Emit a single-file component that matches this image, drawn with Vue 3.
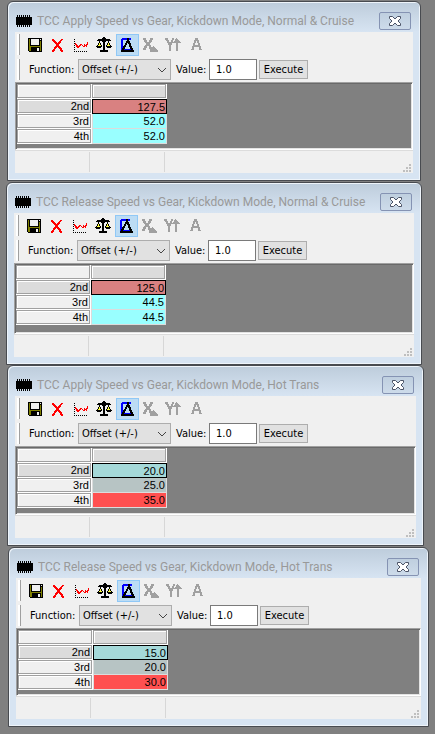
<template>
  <main class="desktop">
    <section
      v-for="(win, i) in windows"
      :key="win.title"
      class="window"
      :style="{ left: win.x + 'px', top: win.y + 'px', width: win.w + 'px', minHeight: win.h + 'px' }"
    >
      <header class="titlebar">
        <svg class="chip" viewBox="0 0 16 12" width="16" height="12" shape-rendering="crispEdges" aria-hidden="true">
          <path d="M0 2h16v8H0zM1 0h1v12H1zM3 0h1v12H3zM5 0h1v12H5zM7 0h1v12H7zM9 0h1v12H9zM11 0h1v12h-1zM13 0h1v12h-1z" />
        </svg>
        <h2 class="title">{{ win.title }}</h2>
        <button class="close" type="button" aria-label="Close">
          <svg viewBox="0 0 12 10" width="12" height="10" aria-hidden="true">
            <path d="M.5 .5h3L6 3 8.500 .5h3v2L9 5l2.500 2.500v2h-3L6 7 3.500 9.500h-3v-2L3 5 .5 2.500z" fill="#fff" stroke="#4b5366" />
          </svg>
        </button>
      </header>

      <div class="client">
        <div class="toolbar">
          <span class="grip"></span>
          <button
            v-for="tool in tools"
            :key="tool.name"
            class="tool"
            :class="{ active: tool.active }"
            type="button"
            :disabled="tool.disabled"
            :aria-label="tool.name"
          >
            <svg viewBox="0 0 16 16" width="16" height="16" shape-rendering="crispEdges" aria-hidden="true">
              <path v-for="(p, n) in tool.paths" :key="n" :d="p.d" :fill="p.fill" fill-rule="evenodd" />
            </svg>
          </button>
        </div>

        <form class="toolbar functions" @submit.prevent>
          <span class="grip"></span>
          <label class="fn-label" :for="'fn' + i">Function:</label>
          <div class="combo">
            <select :id="'fn' + i">
              <option>Offset (+/-)</option>
            </select>
            <svg class="arrow" viewBox="0 0 10 6" width="10" height="6" aria-hidden="true">
              <path d="M1 1l4 4 4-4" fill="none" stroke="#444" />
            </svg>
          </div>
          <label class="value-label" :for="'val' + i">Value:</label>
          <input :id="'val' + i" class="value" type="text" value="1.0">
          <button class="execute" type="submit">Execute</button>
        </form>

        <div class="grid-area">
          <table class="grid">
            <thead>
              <tr><td class="head"></td><td class="head on"></td></tr>
            </thead>
            <tbody>
              <tr v-for="(row, n) in win.rows" :key="row.gear">
                <th class="head" :class="{ on: n === 0 }" scope="row">{{ row.gear }}</th>
                <td class="cell" :class="[row.tone, { selected: n === 0 }]">{{ row.value }}</td>
              </tr>
            </tbody>
          </table>
        </div>

        <footer class="status">
          <span class="pane"></span>
          <span class="pane"></span>
          <svg class="sizer" viewBox="0 0 8 8" width="8" height="8" aria-hidden="true">
            <path d="M6 0h2v2H6zM3 3h2v2H3zM6 3h2v2H6zM0 6h2v2H0zM3 6h2v2H3zM6 6h2v2H6z" fill="#bfbfbf" />
          </svg>
        </footer>
      </div>
    </section>
  </main>
</template>

<script setup>
const rows = (values, tones) =>
  ['2nd', '3rd', '4th'].map((gear, i) => ({ gear, value: values[i], tone: tones[i] }))

const windows = [
  {
    title: 'TCC Apply Speed vs Gear, Kickdown Mode, Normal & Cruise',
    x: 7, y: 1, w: 414, h: 180,
    rows: rows(['127.5', '52.0', '52.0'], ['rose', 'cyan', 'cyan']),
  },
  {
    title: 'TCC Release Speed vs Gear, Kickdown Mode, Normal & Cruise',
    x: 6, y: 182, w: 416, h: 183,
    rows: rows(['125.0', '44.5', '44.5'], ['rose', 'cyan', 'cyan']),
  },
  {
    title: 'TCC Apply Speed vs Gear, Kickdown Mode, Hot Trans',
    x: 7, y: 365, w: 417, h: 181,
    rows: rows(['20.0', '25.0', '35.0'], ['teal', 'slate', 'red']),
  },
  {
    title: 'TCC Release Speed vs Gear, Kickdown Mode, Hot Trans',
    x: 8, y: 547, w: 421, h: 180,
    rows: rows(['15.0', '20.0', '30.0'], ['teal', 'slate', 'red']),
  },
]

const tools = [
  {
    name: 'Save',
    paths: [
      { d: 'M1 1h14v14H2v-1H1z', fill: '#000' },
      { d: 'M2 2h1v7h10V4h1v10H2z', fill: '#808000' },
      { d: 'M4 2h8v6H4z', fill: '#f0f0f0' },
      { d: 'M13 2h1v1h-1z', fill: '#f0f0f0' },
      { d: 'M4 10h9v5H4z', fill: '#000' },
      { d: 'M10 11h2v3h-2z', fill: '#f0f0f0' },
    ],
  },
  {
    name: 'Delete',
    paths: [
      { d: 'M2 2h2v1h1v1h1v1h1v1h1V5h1V4h1V3h1V2h2v1h-1v1h-1v2h-1v1H9v2h1v1h1v1h1v2h1v2h-2v-1h-1v-2H9v-1H8v-1H7v1H6v1H5v2H4v1H2v-2h1v-1h1v-2h1V9h1V7H5V6H4V5H3V4H2z', fill: '#f00' },
    ],
  },
  {
    name: 'Graph',
    paths: [
      { d: 'M1 2h1v1H1zM1 4h1v1H1zM1 6h1v1H1zM1 8h1v1H1zM1 10h1v1H1zM1 12h1v1H1zM1 14h1v1H1zM3 14h1v1H3zM5 14h1v1H5zM7 14h1v1H7zM9 14h1v1H9zM11 14h1v1h-1zM13 14h1v1h-1z', fill: '#000' },
      { d: 'M2 6h1v1h1v1h1v1h1V8h1V7h2v1h1v1h1V7h1v1h1V7h1V5h1v3h-1v2h-1V9h-1v1h-2V9H9V8H8v1H7v1H6v1H4v-1H3V8H2z', fill: '#f00' },
    ],
  },
  {
    name: 'Compare',
    paths: [
      { d: 'M2 6h3v3H1V8h1zM11 6h3v2h1v1h-4z', fill: '#ffff40' },
      { d: 'M7 0h2v1h1v1h4v1h1v1h-5v1H9v8h3v2H4v-2h3V5H6V4H1V3h1V2h4V1h1zM3 4h1v2H3zM2 6h1v2H2zM4 6h1v2H4zM1 8h1v1H1zM5 8h1v1H5zM0 9h6v1H5v1H1v-1H0zM12 4h1v2h-1zM11 6h1v2h-1zM13 6h1v2h-1zM10 8h1v1h-1zM14 8h1v1h-1zM10 9h6v1h-1v1h-4v-1h-1z', fill: '#000' },
    ],
  },
  {
    name: 'Delta',
    active: true,
    paths: [
      { d: 'M2 2h1V1h9v2H4v9h8v2H2z', fill: '#00f' },
      { d: 'M8 1h2v3h1v2h1v3h1v2h1v2h1v2H2v-2h1v-2h1V9h1V8h1V6h1V4h1zM8 6v2H7v2H6v2H5v1h7v-1h-1v-2h-1V7H9V6z', fill: '#000' },
    ],
  },
  {
    name: 'X axis',
    disabled: true,
    paths: [
      { d: 'M1 1h3v2h1v2h2V3h1V1h3v2h-1v2H9v1H8v2h1v2h2v-1h1v1h1v1h1v1h1v1h1v2H8v-3H7V9H5v2H4v2H1v-2h1V9h1V8h1V6H3V5H2V3H1z', fill: '#a0a0a0' },
    ],
  },
  {
    name: 'Y axis',
    disabled: true,
    paths: [
      { d: 'M0 1h3v2h1v2h2V3h1V1h2v2H8v3H7v2H6v6H4V8H3V6H2V4H1V3H0zM11 1h1v1h1v1h1v1h1v1h1v1h-3v8h-2V6H8V5h1V4h1V2h1z', fill: '#a0a0a0' },
    ],
  },
  {
    name: 'All',
    disabled: true,
    paths: [
      { d: 'M7 1h3v2h1v3h1v3h1v3h1v1h-3v-3H6v3H3v-1h1V9h1V6h1V3h1zM8 4v2H7v2h3V6H9V4z', fill: '#a0a0a0' },
    ],
  },
]
</script>

<style>
body {
  margin: 0;
  background: #808080;
}
</style>

<style scoped>
.desktop {
  position: relative;
  min-height: 100vh;
  overflow: hidden;
  background: #808080;
  color: #000;
  font: 11px/15px "DejaVu Sans Condensed", "Open Sans", sans-serif;
}
.window {
  position: absolute;
  display: flex;
  flex-direction: column;
  box-sizing: border-box;
  padding: 0 7px 7px;
  border: 1px solid #484b50;
  border-radius: 6px 6px 0 0;
  background: linear-gradient(#bdccdb, #d7e4f2 30px);
  box-shadow: inset 1px 1px #eef4fa, inset -1px -1px #eef4fa;
}
.titlebar {
  display: flex;
  align-items: center;
  height: 30px;
  padding: 7px 2px 0 1px;
  box-sizing: border-box;
}
.chip {
  flex: none;
}
.title {
  flex: 1;
  min-width: 0;
  margin: 0 0 0 5px;
  overflow: hidden;
  color: #999;
  font: 12px/18px Roboto, "Noto Sans", sans-serif;
  white-space: nowrap;
}
.close {
  display: flex;
  align-items: center;
  justify-content: center;
  width: 32px;
  height: 18px;
  padding: 0;
  border: 1px solid #8593b3;
  border-radius: 2px;
  background: linear-gradient(#bfcfdf, #cddbea);
}
.client {
  display: flex;
  flex: 1;
  flex-direction: column;
  background: #f0f0f0;
}
.toolbar {
  display: flex;
  align-items: center;
  height: 25px;
  padding-left: 2px;
}
.grip {
  flex: none;
  box-sizing: border-box;
  width: 3px;
  height: 21px;
  margin-right: 4px;
  border-right: 1px solid #a0a0a0;
  background: #fff;
}
.tool {
  display: flex;
  align-items: center;
  box-sizing: border-box;
  width: 23px;
  height: 22px;
  padding: 0 0 0 2px;
  border: 1px solid transparent;
  background: none;
}
.tool.active {
  border-color: #90c8f6;
  background: #bcdcf4;
}
.fn-label {
  width: 49px;
  margin-left: 5px;
}
.combo {
  position: relative;
  width: 93px;
}
.combo select {
  display: block;
  box-sizing: border-box;
  width: 100%;
  height: 21px;
  padding: 0 16px 0 3px;
  border: 1px solid #adadad;
  border-radius: 0;
  background: #e1e1e1;
  color: #000;
  font: inherit;
  appearance: none;
}
.arrow {
  position: absolute;
  top: 8px;
  right: 4px;
  pointer-events: none;
}
.value-label {
  width: 33px;
  margin-left: 5px;
}
.value {
  box-sizing: border-box;
  width: 48px;
  height: 21px;
  padding: 0 6px;
  border: 1px solid #7a7a7a;
  background: #fff;
  font: inherit;
}
.execute {
  box-sizing: border-box;
  width: 49px;
  height: 19px;
  margin-left: 2px;
  padding: 0;
  border: 1px solid #adadad;
  background: #e1e1e1;
  color: #000;
  font: inherit;
}
.grid-area {
  flex: 1;
  padding: 1px 1px 4px;
  border: 1px solid;
  border-color: #a0a0a0 #fff #fff #a0a0a0;
  background: #808080;
  box-shadow: inset 1px 1px #696969, inset -1px -1px #e3e3e3;
}
.grid {
  border-spacing: 0;
  table-layout: fixed;
  width: 150px;
  font: 11px/12px "Liberation Sans", Arial, sans-serif;
  text-align: right;
}
.grid td,
.grid th {
  box-sizing: border-box;
  width: 75px;
  height: 15px;
  padding: 0 2px 0 0;
  font-weight: normal;
}
.grid .head {
  border: 1px solid #fff;
  border-width: 0 1px 1px 0;
  background: #f0f0f0;
  box-shadow: inset 0 0 0 1px #a0a0a0, inset 2px 2px #fff;
}
.grid .on {
  background: #dcdcdc;
}
.grid .cell {
  border: 1px solid #dcdcdc;
  border-width: 0 1px 1px;
  padding-right: 1px;
}
.grid .selected {
  border: 1px solid #000;
}
.rose { background: #d98181; }
.cyan { background: #99ffff; }
.teal { background: #a5d9d9; }
.slate { background: #b7c4c4; }
.red { background: #ff5050; }
.status {
  display: flex;
  height: 23px;
  box-sizing: border-box;
  padding: 1px 2px 1px 0;
  border-top: 1px solid #dcdcdc;
}
.pane {
  box-sizing: border-box;
  width: 75px;
  border-right: 1px solid #d7d7d7;
}
.sizer {
  margin-left: auto;
  align-self: flex-end;
}
</style>
